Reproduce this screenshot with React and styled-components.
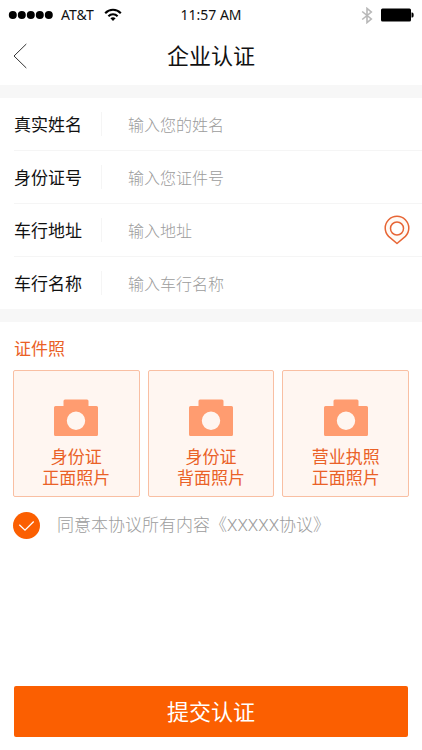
import React, { useState } from "react";
import styled, { createGlobalStyle } from "styled-components";

const ORANGE = "#fb5f01";
const DEEP_ORANGE = "#ea6127";

const GlobalStyle = createGlobalStyle`
  *, *::before, *::after { box-sizing: border-box; }
  body {
    margin: 0;
    background: #fff;
    color: #111;
    font-family: "Noto Sans CJK SC", "Noto Sans", sans-serif;
    font-weight: 400;
  }
  button, input { font: inherit; }
`;

const Page = styled.form`
  display: flex;
  flex-direction: column;
  min-height: 100vh;
`;

const StatusBar = styled.div`
  display: grid;
  grid-template-columns: 1fr auto 1fr;
  align-items: center;
  height: 30px;
  padding: 0 8px;
  font-family: "Noto Sans", sans-serif;
  font-size: 14px;
  line-height: 20px;
`;

const StatusGroup = styled.div`
  display: flex;
  align-items: center;
  justify-content: ${(p) => (p.$end ? "flex-end" : "flex-start")};
  gap: 8px;
`;

const Icon = styled.svg`
  display: block;
  flex: none;
`;

const NavBar = styled.header`
  display: grid;
  grid-template-columns: 40px 1fr 40px;
  align-items: center;
  height: 55px;
  padding-bottom: 4px;
`;

const BackButton = styled.button`
  display: flex;
  height: 40px;
  padding: 7px 0 7px 13px;
  border: 0;
  background: none;
`;

const Title = styled.h1`
  margin: 0;
  padding-bottom: 4px;
  font-size: 22px;
  line-height: 32px;
  font-weight: 400;
  text-align: center;
`;

const Band = styled.div`
  height: 13px;
  background: #f7f7f7;
`;

const Fields = styled.div`
  padding-left: 14px;
`;

const FieldRow = styled.div`
  display: flex;
  align-items: center;
  padding: 14px 12px 14px 0;

  & + & { border-top: 1px solid #f5f5f5; }
`;

const FieldLabel = styled.label`
  width: 88px;
  height: 24px;
  border-right: 1px solid #f5f5f5;
  font-size: 17px;
  line-height: 24px;
  white-space: nowrap;
`;

const FieldInput = styled.input`
  flex: 1;
  min-width: 0;
  height: 24px;
  padding: 0 0 0 26px;
  border: 0;
  outline: 0;
  background: none;
  color: #111;
  font-size: 16px;
  font-weight: 300;

  &::placeholder { color: #9c9c9c; opacity: 1; }
`;

const PinButton = styled.button`
  height: 24px;
  display: flex;
  align-items: center;
  padding: 0;
  border: 0;
  background: none;
`;

const Section = styled.section`
  padding: 14px 13px 0;
`;

const SectionTitle = styled.h2`
  margin: 0 0 10px 1px;
  font-size: 17px;
  line-height: 24px;
  font-weight: 400;
  color: ${DEEP_ORANGE};
`;

const Cards = styled.div`
  display: grid;
  grid-template-columns: repeat(3, 1fr);
  gap: 8px;
`;

const UploadCard = styled.button`
  display: flex;
  flex-direction: column;
  align-items: center;
  justify-content: flex-end;
  aspect-ratio: 1;
  padding: 0 0 9px;
  border: 1px solid #f9bfa3;
  border-radius: 2px;
  background: #fff6f1;
  color: ${DEEP_ORANGE};
`;

const CardIcon = styled.span`
  padding-bottom: 8px;
`;

const CardLine = styled.span`
  display: block;
  font-size: 17px;
  line-height: 21px;
`;

const Agreement = styled.label`
  display: flex;
  align-items: center;
  gap: 17px;
  margin: 15px 13px;
  color: #9c9c9c;
  font-family: Roboto, "Noto Sans CJK SC", sans-serif;
  font-size: 17px;
  line-height: 27px;
  font-weight: 300;
`;

const RoundCheck = styled.span`
  display: grid;
  width: 27px;
  height: 27px;
  border-radius: 50%;
  background: ${(p) => (p.$on ? ORANGE : "#ccc")};

  & > * { grid-area: 1 / 1; }
`;

const CheckInput = styled.input`
  width: 27px;
  height: 27px;
  margin: 0;
  opacity: 0;
`;

const Submit = styled.button`
  margin: auto 14px 13px;
  padding: 8px 0 11px;
  border: 0;
  border-radius: 2px;
  background: ${ORANGE};
  color: #fff;
  font-size: 22px;
  line-height: 32px;
`;

const FIELDS = [
  { id: "name", label: "真实姓名", hint: "输入您的姓名" },
  { id: "idno", label: "身份证号", hint: "输入您证件号" },
  { id: "address", label: "车行地址", hint: "输入地址", pin: true },
  { id: "shop", label: "车行名称", hint: "输入车行名称" },
];

const UPLOADS = [
  ["身份证", "正面照片"],
  ["身份证", "背面照片"],
  ["营业执照", "正面照片"],
];

const Signal = () => (
  <Icon width="45" height="10" viewBox="0 0 45 10" aria-hidden="true">
    {[4.8, 13.8, 22.8, 31.8, 40.8].map((x) => (
      <circle key={x} cx={x} cy="5" r="4" />
    ))}
  </Icon>
);

const Wifi = () => (
  <Icon width="20" height="14" viewBox="-2 0 20 14" fill="none" stroke="#000" strokeWidth="2.1" aria-hidden="true">
    <path d="M1.2 5.2C5.6.6 12.4.6 16.8 5.2" />
    <path d="M4.4 8.2C7 5.6 11 5.6 13.6 8.2" />
    <path d="M6.4 10.2C7.8 8.9 10.2 8.9 11.6 10.2L9 13z" fill="#000" stroke="none" />
  </Icon>
);

const Bluetooth = () => (
  <Icon width="12" height="17" viewBox="0 0 12 17" fill="none" stroke="#b8b8b8" strokeWidth="1.6" aria-hidden="true">
    <path d="M1.2 4.5L10.3 12 6 15.6V1.4L10.3 5 1.2 12.5" />
  </Icon>
);

const Battery = () => (
  <Icon width="33" height="14" viewBox="0 0 33 14" aria-hidden="true">
    <rect width="30" height="13" y="0.5" rx="1.5" />
    <path d="M30.5 4.5h.8q1.4 0 1.4 2.5t-1.4 2.5h-.8z" />
  </Icon>
);

const Chevron = () => (
  <Icon width="14" height="26" viewBox="0 0 14 26" fill="none" stroke="#333" strokeWidth="1" aria-hidden="true">
    <path d="M13.3 1L1 13l12.3 12" />
  </Icon>
);

const Pin = () => (
  <Icon width="26" height="30" viewBox="0 0 26 30" fill="none" stroke="#e76535" strokeWidth="1.5" aria-hidden="true">
    <path d="M13 28.500L4.600 21.400A11.800 11.800 0 1 1 21.400 21.400z" fill="#fffaf5" strokeLinejoin="round" />
    <circle cx="13" cy="13.500" r="6.500" fill="#fff" />
  </Icon>
);

const Camera = () => (
  <Icon width="44" height="38" viewBox="0 0 44 38" aria-hidden="true">
    <path
      fill="#ff9c70"
      fillRule="evenodd"
      d="M11 .5h22q1.500 0 1.500 1.500v5H42.500q1.500 0 1.500 1.500v27q0 1.500-1.500 1.500h-41Q0 37 0 35.500v-27Q0 7 1.500 7H9.500V2Q9.500 .5 11 .5zM22 12.500a9.200 9.200 0 1 0 0 18.400a9.200 9.200 0 1 0 0-18.400z"
    />
  </Icon>
);

const Tick = () => (
  <Icon width="27" height="27" viewBox="0 0 27 27" fill="none" stroke="#fff" strokeWidth="1.3" aria-hidden="true">
    <path d="M6.300 12.800l5.700 5.400 8.700-8.700" />
  </Icon>
);

export default function App() {
  const [agreed, setAgreed] = useState(true);

  return (
    <>
      <GlobalStyle />
      <Page onSubmit={(e) => e.preventDefault()}>
        <StatusBar>
          <StatusGroup>
            <Signal />
            <span>AT&amp;T</span>
            <Wifi />
          </StatusGroup>
          <span>11:57 AM</span>
          <StatusGroup $end>
            <Bluetooth />
            <Battery />
          </StatusGroup>
        </StatusBar>
        <NavBar>
          <BackButton type="button" aria-label="返回">
            <Chevron />
          </BackButton>
          <Title>企业认证</Title>
        </NavBar>
        <Band />
        <Fields>
          {FIELDS.map((f) => (
            <FieldRow key={f.id}>
              <FieldLabel htmlFor={f.id}>{f.label}</FieldLabel>
              <FieldInput id={f.id} placeholder={f.hint} />
              {f.pin && (
                <PinButton type="button" aria-label="定位">
                  <Pin />
                </PinButton>
              )}
            </FieldRow>
          ))}
        </Fields>
        <Band />
        <Section>
          <SectionTitle>证件照</SectionTitle>
          <Cards>
            {UPLOADS.map((lines) => (
              <UploadCard key={lines.join("")} type="button">
                <CardIcon>
                  <Camera />
                </CardIcon>
                {lines.map((line) => (
                  <CardLine key={line}>{line}</CardLine>
                ))}
              </UploadCard>
            ))}
          </Cards>
        </Section>
        <Agreement>
          <RoundCheck $on={agreed}>
            <Tick />
            <CheckInput type="checkbox" checked={agreed} onChange={(e) => setAgreed(e.target.checked)} />
          </RoundCheck>
          <span>同意本协议所有内容《XXXXX协议》</span>
        </Agreement>
        <Submit type="submit">提交认证</Submit>
      </Page>
    </>
  );
}
